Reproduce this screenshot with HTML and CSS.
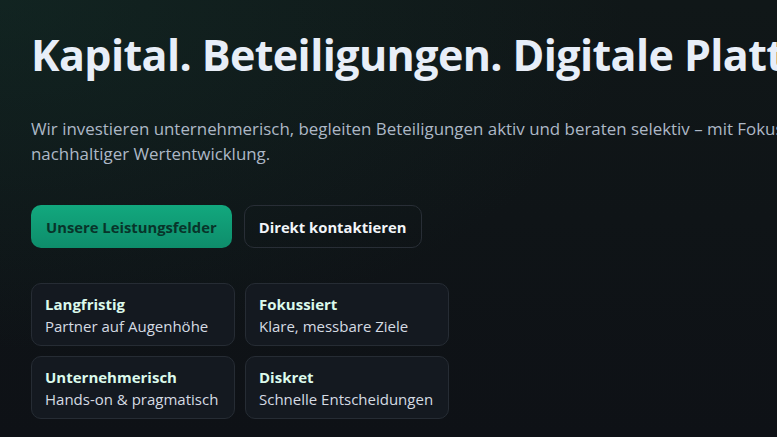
FILE: index.html
```html
<!DOCTYPE html>
<html lang="de">
<head>
<meta charset="utf-8">
<title>Kapital. Beteiligungen. Digitale Plattformen.</title>
<link rel="stylesheet" href="styles.css">
</head>
<body>
<main class="hero">
  <h1 class="hero-title">Kapital. Beteiligungen. Digitale Plattformen.</h1>
  <p class="hero-lead">Wir investieren unternehmerisch, begleiten Beteiligungen aktiv und beraten selektiv – mit Fokus auf Substanz und nachhaltiger Wertentwicklung.</p>
  <div class="hero-actions">
    <a class="btn btn-primary" href="#leistungen">Unsere Leistungsfelder</a>
    <a class="btn btn-ghost" href="#kontakt">Direkt kontaktieren</a>
  </div>
  <div class="facts">
    <div class="fact">
      <div class="fact-title">Langfristig</div>
      <div class="fact-text">Partner auf Augenhöhe</div>
    </div>
    <div class="fact">
      <div class="fact-title">Fokussiert</div>
      <div class="fact-text">Klare, messbare Ziele</div>
    </div>
    <div class="fact">
      <div class="fact-title">Unternehmerisch</div>
      <div class="fact-text">Hands-on &amp; pragmatisch</div>
    </div>
    <div class="fact">
      <div class="fact-title">Diskret</div>
      <div class="fact-text">Schnelle Entscheidungen</div>
    </div>
  </div>
</main>
</body>
</html>
```

FILE: styles.css
```css
html, body {
  margin: 0;
  height: 100%;
  overflow: hidden;
}
body {
  background:
    radial-gradient(900px 500px at 0% 0%, rgba(20, 60, 50, 0.35), transparent 70%),
    linear-gradient(180deg, #101718 0%, #0e1116 100%);
  color: #e8eef7;
  font-family: "Open Sans", "Noto Sans", sans-serif;
}
.hero {
  width: 1100px;
  padding: 24px 31px 0;
  box-sizing: border-box;
}
.hero-title {
  margin: 0;
  font-size: 43px;
  line-height: 62px;
  font-weight: 700;
  color: #e8eef8;
  letter-spacing: -0.6px;
  white-space: nowrap;
}
.hero-lead {
  margin: 30px 0 0;
  max-width: 940px;
  font-size: 16.9px;
  line-height: 25px;
  color: #adb8c6;
}
.hero-actions {
  display: flex;
  gap: 12px;
  margin-top: 39px;
}
.btn {
  display: inline-flex;
  align-items: center;
  height: 43px;
  padding: 0 15px;
  box-sizing: border-box;
  border-radius: 10px;
  font-size: 14.8px;
  font-weight: 700;
  text-decoration: none;
}
.btn-primary {
  background: linear-gradient(180deg, #12a87e 0%, #0e8d6b 100%);
  color: #08342a;
}
.btn-ghost {
  border: 1px solid #282e36;
  padding: 0 14px;
  color: #f2f5f9;
}
.facts {
  display: grid;
  grid-template-columns: 204px 204px;
  gap: 10px 10px;
  margin-top: 35px;
}
.fact {
  border: 1px solid #262c34;
  border-radius: 10px;
  background: #141920;
  padding: 9px 13px 8px;
  font-size: 15px;
  line-height: 22px;
}
.fact-title {
  font-weight: 700;
  color: #dcfaec;
}
.fact-text {
  color: #d5dbe3;
}
```
